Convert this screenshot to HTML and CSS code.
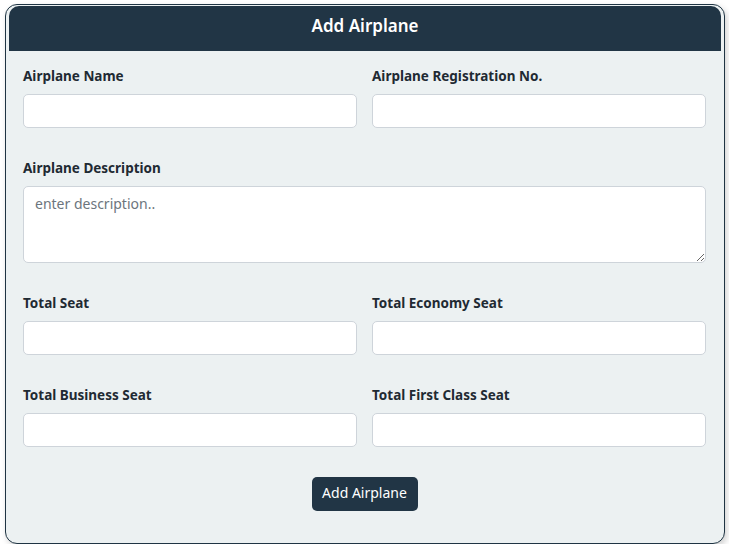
FILE: index.html
```html
<!DOCTYPE html>
<html lang="en">
<head>
<meta charset="utf-8">
<title>Add Airplane</title>
<link rel="stylesheet" href="styles.css">
</head>
<body>
<div class="card">
  <div class="card-header">Add Airplane</div>
  <form class="card-body">
    <div class="row">
      <div class="field">
        <label class="label">Airplane Name</label>
        <input class="input" type="text">
      </div>
      <div class="field">
        <label class="label">Airplane Registration No.</label>
        <input class="input" type="text">
      </div>
    </div>
    <div class="row single">
      <div class="field">
        <label class="label">Airplane Description</label>
        <textarea class="textarea" placeholder="enter description.."></textarea>
      </div>
    </div>
    <div class="row">
      <div class="field">
        <label class="label">Total Seat</label>
        <input class="input" type="text">
      </div>
      <div class="field">
        <label class="label">Total Economy Seat</label>
        <input class="input" type="text">
      </div>
    </div>
    <div class="row">
      <div class="field">
        <label class="label">Total Business Seat</label>
        <input class="input" type="text">
      </div>
      <div class="field">
        <label class="label">Total First Class Seat</label>
        <input class="input" type="text">
      </div>
    </div>
    <div class="actions">
      <button class="btn" type="button">Add Airplane</button>
    </div>
  </form>
</div>
</body>
</html>
```

FILE: styles.css
```css
* { box-sizing: border-box; }
html, body { margin: 0; padding: 0; background: #ffffff; }
body {
  font-family: "Noto Sans", "Open Sans", sans-serif;
  color: #212529;
  padding: 4px 5px 0 5px;
}
.card {
  width: 720px;
  height: 540px;
  border: 1px solid #1f3443;
  border-radius: 12px;
  background: #ecf1f2;
  padding: 1px 3px 0 3px;
  box-shadow: 2px 3px 6px rgba(0, 0, 0, 0.18);
  display: flex;
  flex-direction: column;
}
.card-header {
  height: 45px;
  flex: none;
  background: #213545;
  color: #ffffff;
  border-radius: 10px 10px 0 0;
  font-size: 17px;
  font-weight: 600;
  display: flex;
  align-items: center;
  justify-content: center;
  padding-bottom: 6px;
}
.card-body {
  padding: 15px 15px 0 14px;
  display: flex;
  flex-direction: column;
  gap: 30px;
  margin: 0;
}
.row {
  display: grid;
  grid-template-columns: 1fr 1fr;
  column-gap: 15px;
}
.row.single { grid-template-columns: 1fr; }
.field { display: flex; flex-direction: column; }
.label {
  font-size: 13.5px;
  font-weight: 700;
  line-height: 20px;
  margin-bottom: 8px;
  color: #1f2a33;
}
.input, .textarea {
  height: 34px;
  border: 1px solid #ced4da;
  border-radius: 5px;
  background: #ffffff;
  font-family: inherit;
  font-size: 14px;
  padding: 6px 12px;
  margin: 0;
  outline: none;
}
.textarea {
  height: 77px;
  resize: vertical;
  padding: 7px 11px;
}
.textarea::placeholder { color: #6c757d; }
.actions {
  display: flex;
  justify-content: center;
}
.btn {
  height: 34px;
  width: 106px;
  background: #213545;
  color: #ffffff;
  border: none;
  border-radius: 5px;
  font-family: inherit;
  font-size: 14px;
  padding: 0 0 3px 0;
}
```
